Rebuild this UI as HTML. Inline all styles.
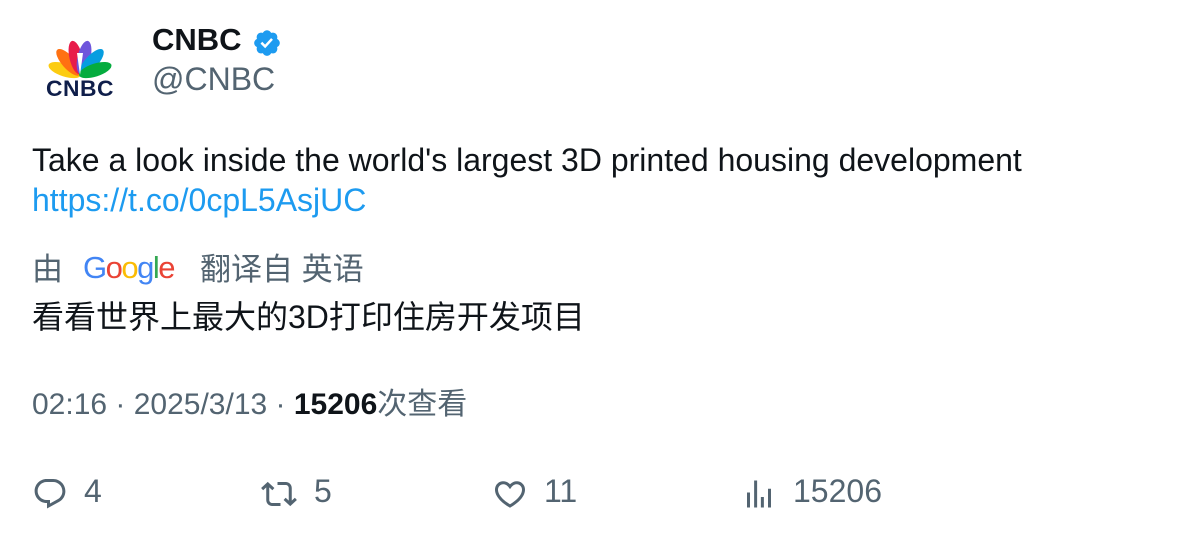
<!DOCTYPE html>
<html><head><meta charset="utf-8"><style>
body{margin:0;width:1196px;height:538px;background:#fff;font-family:"Liberation Sans","Noto Sans CJK SC",sans-serif;color:#0f1419;position:relative;overflow:hidden}
.a{position:absolute;white-space:nowrap}
.g{color:#536471}
.ic{position:absolute;width:36px;height:36px;fill:#536471}
</style></head><body>
<svg class="a" style="left:40px;top:36px" width="80" height="66" viewBox="0 0 80 66">
<g transform="translate(40,39)">
<ellipse rx="6.5" ry="17" transform="rotate(-72) translate(0,-16)" fill="#fccc12"/>
<ellipse rx="6.5" ry="17" transform="rotate(-42) translate(0,-17)" fill="#ff7112"/>
<ellipse rx="6.5" ry="17" transform="rotate(-13) translate(0,-18)" fill="#e81c4a"/>
<ellipse rx="6.5" ry="17" transform="rotate(13) translate(0,-18)" fill="#6e55dc"/>
<ellipse rx="6.5" ry="17" transform="rotate(42) translate(0,-17)" fill="#069de0"/>
<ellipse rx="6.5" ry="17" transform="rotate(72) translate(0,-16)" fill="#05ac3f"/>
<path d="M0 0 L-3 -22 L3 -22 Z" fill="#fff"/>
</g>
<text x="40" y="60" text-anchor="middle" font-family="Liberation Sans" font-weight="bold" font-size="22" letter-spacing="0.5" fill="#0f1e4a" textLength="68" lengthAdjust="spacingAndGlyphs">CNBC</text>
</svg>
<div class="a" style="left:152px;top:22px;font-size:31px;font-weight:bold">CNBC</div>
<svg class="a" style="left:252px;top:28px" width="30" height="30" viewBox="0 0 24 24"><path fill="#1d9bf0" d="M22.25 12c0-1.43-.88-2.670-2.19-3.34.46-1.39.2-2.9-.81-3.91s-2.52-1.27-3.91-.81c-.66-1.31-1.910-2.19-3.34-2.19s-2.67.88-3.33 2.19c-1.4-.46-2.91-.2-3.92.81s-1.26 2.52-.8 3.91c-1.31.67-2.2 1.91-2.2 3.34s.89 2.67 2.2 3.34c-.46 1.39-.21 2.9.8 3.91s2.52 1.26 3.91.81c.67 1.31 1.91 2.19 3.34 2.19s2.68-.88 3.34-2.19c1.39.45 2.9.2 3.91-.81s1.27-2.52.81-3.91c1.31-.67 2.19-1.91 2.19-3.34zm-11.71 4.2L6.8 12.46l1.41-1.42 2.26 2.26 4.8-5.23 1.47 1.36-6.2 6.77z"/></svg>
<div class="a g" style="left:152px;top:61px;font-size:32px">@CNBC</div>
<div class="a" style="left:32px;top:142px;font-size:32px">Take a look inside the world's largest 3D printed housing development</div>
<div class="a" style="left:32px;top:182px;font-size:32px;color:#1d9bf0">https://t.co/0cpL5AsjUC</div>
<div class="a g" style="left:32px;top:244px;font-size:31px">由</div>
<div class="a" style="left:83px;top:250px;font-size:31px;letter-spacing:-1.5px"><span style="color:#4285f4">G</span><span style="color:#ea4335">o</span><span style="color:#fbbc05">o</span><span style="color:#4285f4">g</span><span style="color:#34a853">l</span><span style="color:#ea4335">e</span></div>
<div class="a g" style="left:200px;top:244px;font-size:31px">翻译自 英语</div>
<div class="a" style="left:32px;top:292px;font-size:32px">看看世界上最大的3D打印住房开发项目</div>
<div class="a g" style="left:32px;top:379px;font-size:30px">02:16 · 2025/3/13 · <b style="color:#0f1419">15206</b>次查看</div>
<svg class="ic" style="left:32px;top:476px" viewBox="0 0 24 24"><path d="M1.751 10c0-4.42 3.584-8 8.005-8h4.366c4.490 0 8.129 3.64 8.129 8.13 0 2.96-1.607 5.68-4.196 7.11l-8.054 4.46v-3.690h-.067c-4.49.1-8.183-3.51-8.183-8.01zm8.005-6c-3.317 0-6.005 2.69-6.005 6 0 3.37 2.77 6.08 6.138 6.01l.351-.01h1.761v2.3l5.087-2.81c1.951-1.08 3.163-3.13 3.163-5.36 0-3.39-2.744-6.13-6.129-6.13H9.756z"/></svg>
<div class="a g" style="left:84px;top:473px;font-size:32px">4</div>
<svg class="ic" style="left:261px;top:476px" viewBox="0 0 24 24"><path d="M4.5 3.88l4.432 4.14-1.364 1.46L5.5 7.55V16c0 1.1.896 2 2 2H13v2H7.5c-2.209 0-4-1.790-4-4V7.550L1.432 9.48.068 8.02 4.5 3.88zM16.5 6H11V4h5.5c2.209 0 4 1.79 4 4v8.45l2.068-1.93 1.364 1.46-4.432 4.14-4.432-4.14 1.364-1.46 2.068 1.93V8c0-1.1-.896-2-2-2z"/></svg>
<div class="a g" style="left:314px;top:473px;font-size:32px">5</div>
<svg class="ic" style="left:492px;top:476px" viewBox="0 0 24 24"><path d="M16.697 5.5c-1.222-.06-2.679.51-3.890 2.160l-.805 1.09-.806-1.09C9.984 6.01 8.526 5.44 7.304 5.5c-1.243.07-2.349.78-2.910 1.910-.552 1.12-.633 2.78.479 4.82 1.074 1.97 3.257 4.27 7.129 6.61 3.870-2.340 6.052-4.640 7.126-6.610 1.111-2.04 1.030-3.700.477-4.820-.561-1.130-1.666-1.840-2.908-1.910zm4.187 7.690c-1.351 2.480-4.001 5.120-8.379 7.670l-.503.3-.504-.3c-4.379-2.55-7.029-5.19-8.382-7.67-1.36-2.5-1.41-4.86-.514-6.67.887-1.79 2.647-2.910 4.601-3.010 1.651-.09 3.368.56 4.798 2.010 1.429-1.450 3.146-2.100 4.796-2.010 1.954.1 3.714 1.220 4.601 3.010.896 1.810.846 4.170-.514 6.670z"/></svg>
<div class="a g" style="left:544px;top:473px;font-size:32px">11</div>
<svg class="ic" style="left:741px;top:476px" viewBox="0 0 24 24"><path d="M8.75 21V3h2v18h-2zM18 21V8.5h2V21h-2zM4 21l.004-10h2L6 21H4zm9.248 0v-7h2v7h-2z"/></svg>
<div class="a g" style="left:793px;top:473px;font-size:32px">15206</div>
</body></html>
